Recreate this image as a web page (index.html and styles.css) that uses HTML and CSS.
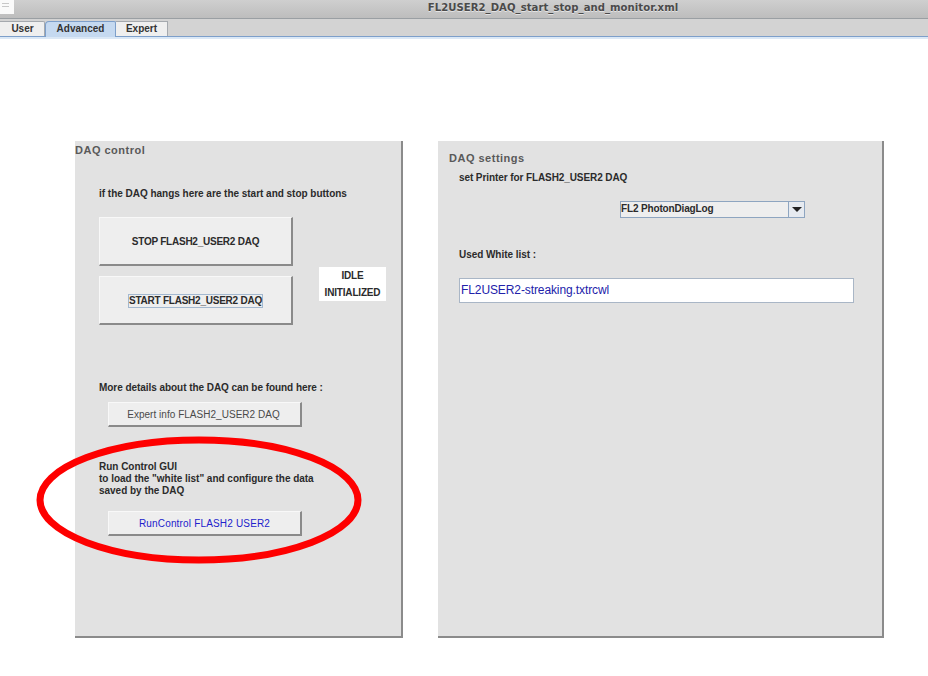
FILE: index.html
```html
<!DOCTYPE html>
<html lang="en">
<head>
<meta charset="utf-8">
<title>FL2USER2_DAQ_start_stop_and_monitor.xml</title>
<link rel="stylesheet" href="styles.css">
</head>
<body>
<header class="titlebar">
  <div class="app-icon"><span></span><span></span></div>
  <div class="title">FL2USER2_DAQ_start_stop_and_monitor.xml</div>
</header>
<nav class="tabs">
  <div class="tab tab-user">User</div>
  <div class="tab tab-active">Advanced</div>
  <div class="tab tab-expert">Expert</div>
</nav>
<main class="canvas">
  <section class="panel panel-left">
    <h2 class="legend legend-left">DAQ control</h2>
    <p class="label hint">if the DAQ hangs here are the start and stop buttons</p>
    <div class="action-row">
      <div class="action-col">
        <button class="btn btn-big">STOP FLASH2_USER2 DAQ</button>
        <button class="btn btn-big"><span class="focus">START FLASH2_USER2 DAQ</span></button>
      </div>
      <div class="status">IDLE<br>INITIALIZED</div>
    </div>
    <p class="label details">More details about the DAQ can be found here :</p>
    <button class="btn btn-small btn-expert">Expert info FLASH2_USER2 DAQ</button>
    <p class="label runtext">Run Control GUI<br>to load the "white list" and configure the data<br>saved by the DAQ</p>
    <button class="btn btn-small btn-run">RunControl FLASH2 USER2</button>
  </section>
  <section class="panel panel-right">
    <h2 class="legend legend-right">DAQ settings</h2>
    <p class="label printer">set Printer for FLASH2_USER2 DAQ</p>
    <div class="combo">
      <span class="combo-value">FL2 PhotonDiagLog</span>
      <span class="combo-arrow"><svg width="10" height="5" viewBox="0 0 10 5"><path d="M0 0H10L5 5Z" fill="#222"/></svg></span>
    </div>
    <p class="label whitelist">Used White list :</p>
    <div class="textfield">FL2USER2-streaking.txtrcwl</div>
  </section>
</main>
<svg class="marker" width="340" height="140" viewBox="0 0 340 140">
  <ellipse cx="166" cy="70" rx="159" ry="60" fill="none" stroke="#fe0000" stroke-width="7"/>
</svg>
</body>
</html>
```

FILE: styles.css
```css
* { box-sizing: border-box; }
html, body { margin: 0; padding: 0; height: 676px; overflow: hidden; background: #fff; }
body { font-family: "Liberation Sans", Arial, sans-serif; color: #222; position: relative; }

.titlebar {
  height: 19px;
  background: linear-gradient(#cfcfcf, #bdbdbd);
  border-bottom: 1px solid #9a9fa3;
  display: flex;
  align-items: center;
  justify-content: center;
  position: relative;
}
.app-icon {
  position: absolute; left: 0; top: 0; width: 14px; height: 14px;
  background: #fafafa; padding: 3px 2px;
  display: flex; flex-direction: column; gap: 2px;
}
.app-icon span { display: block; width: 7px; height: 1px; background: #c8c8c8; }
.title {
  font-family: "DejaVu Sans", sans-serif; font-size: 10.1px; font-weight: bold;
  letter-spacing: 0.04px;
  color: #4a4a4a; margin-left: 178px; margin-top: -4px;
  text-shadow: 0 1px 0 #e4e4e4;
}

.tabs {
  height: 20px;
  background: #d3d3d3;
  display: flex;
  align-items: flex-start;
  padding-top: 2px;
  border-bottom: 2px solid #dbe8f6;
  box-shadow: inset 0 -1px 0 #7d9fca;
}
.tab {
  height: 15px;
  font-size: 10px;
  font-weight: bold;
  line-height: 14px;
  text-align: center;
  color: #333;
  background: #efefef;
  border: 1px solid #a5a9ae;
  border-bottom: 0;
}
.tab-user { width: 45px; border-left: 0; border-radius: 0 2px 0 0; padding-left: 1px; }
.tab-active { width: 71px; background: #c5d9f0; border-color: #7d9fca; border-radius: 4px 2px 0 0; height: 16px; }
.tab-expert { width: 52px; border-left: 0; }

.canvas {
  display: flex;
  align-items: flex-start;
  padding: 102px 0 0 75px;
  gap: 35px;
}
.panel {
  height: 497px;
  background: #e2e2e2;
  border-right: 2px solid #8b8b8b;
  border-bottom: 2px solid #8b8b8b;
}
.panel-left { width: 328px; }
.panel-right { width: 446px; }

.legend {
  margin: 0;
  font-size: 11px;
  line-height: 13px;
  font-weight: bold;
  letter-spacing: 0.5px;
  color: #595959;
}
.legend-left { padding-top: 3px; }
.legend-right { padding: 11px 0 0 11px; }

.label {
  margin: 0;
  font-size: 10px;
  line-height: 12px;
  font-weight: bold;
  color: #2b2b2b;
}
.hint { margin: 31px 0 0 24px; letter-spacing: -0.02px; }
.details { margin: 57px 0 0 24px; letter-spacing: -0.05px; }
.runtext { margin: 34px 0 0 24px; letter-spacing: -0.02px; }
.printer { margin: 7px 0 0 21px; letter-spacing: -0.09px; }
.whitelist { margin: 31px 0 0 21px; letter-spacing: -0.05px; }

.action-row { display: flex; align-items: flex-start; margin: 17px 0 0 24px; }
.action-col { display: flex; flex-direction: column; gap: 10px; }

.btn {
  display: flex;
  align-items: center;
  justify-content: center;
  padding: 0;
  font-family: inherit;
  background: #eeeeee;
  border: 1px solid #f8f8f8;
  border-right: 2px solid #8a8a8a;
  border-bottom: 2px solid #8a8a8a;
}
.btn-big { width: 194px; height: 49px; font-size: 10px; letter-spacing: -0.24px; font-weight: bold; color: #2b2b2b; }
.btn-small { width: 194px; height: 25px; font-size: 10px; }
.btn-expert { margin: 8px 0 0 33px; color: #4a4a4a; letter-spacing: 0.03px; padding-right: 2px; }
.btn-run { margin: 14px 0 0 33px; color: #2222cc; letter-spacing: 0.17px; }
.focus { border: 1px solid #a3b8cf; line-height: 12px; margin-top: 2px; }

.status {
  width: 67px;
  height: 34px;
  margin: 50px 0 0 26px;
  background: #fff;
  font-size: 10px;
  letter-spacing: -0.18px;
  font-weight: bold;
  line-height: 17px;
  text-align: center;
  color: #2b2b2b;
}

.combo {
  display: flex;
  width: 185px;
  height: 17px;
  margin: 17px 0 0 182px;
  border: 1px solid #8ea5c0;
  background: #eeeeee;
}
.combo-value { flex: 1; font-size: 10px; letter-spacing: -0.15px; font-weight: bold; line-height: 13px; color: #2b2b2b; }
.combo-arrow {
  width: 16px;
  display: flex; align-items: center; justify-content: center;
  border-left: 1px solid #8ea5c0;
  background: #e6eaf0;
}

.textfield {
  width: 395px;
  height: 25px;
  margin: 17px 0 0 21px;
  padding-left: 1px;
  background: #fff;
  border: 1px solid #a9b6c6;
  font-size: 12px;
  letter-spacing: -0.1px;
  line-height: 23px;
  color: #2222aa;
}

.marker { position: absolute; left: 33px; top: 430px; }
```
